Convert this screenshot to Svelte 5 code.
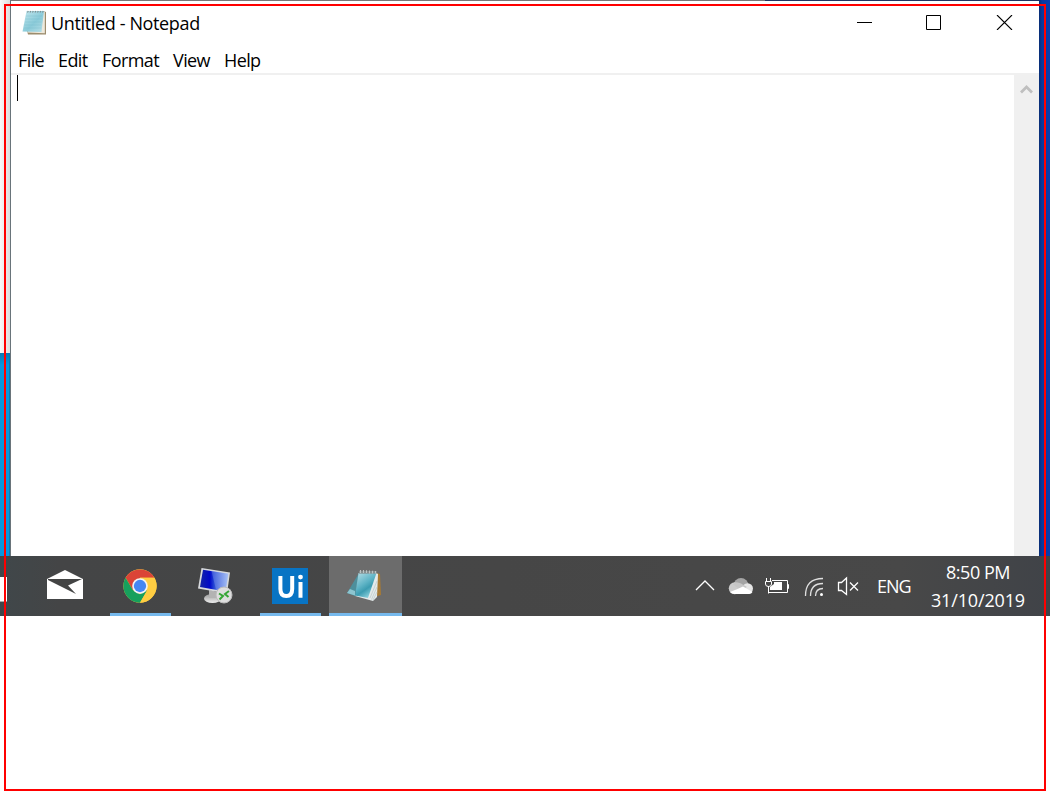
<script>
  const menus = [
    { label: 'File', width: 26 },
    { label: 'Edit', width: 30 },
    { label: 'Format', width: 57 },
    { label: 'View', width: 37 },
    { label: 'Help', width: 37 }
  ];
</script>

<div class="page">
  <div class="desktop">
    <div class="left-edge"><div class="pale"></div><div class="blue"></div></div>
    <main class="window">
      <div class="topline"></div>
      <header>
        <svg class="pad" width="25" height="26" viewBox="0 0 25 26">
          <defs><linearGradient id="pg" x1="0" x2="1" y2="1"><stop stop-color="#c5e8ef" /><stop offset=".55" stop-color="#8bcbd9" /><stop offset="1" stop-color="#b7dfe7" /></linearGradient></defs>
          <path d="M21 2 24 3V25.5H6L5 22Z" fill="#9c8c6d" />
          <path d="M21 2 22.8 3V24.2L5 23.5Z" fill="#eee9dc" />
          <path d="M4.5 2H22L19.5 23 .5 22.5Z" fill="url(#pg)" />
          <path d="M4 7H20M3.5 10H20M3 13H19.5M2.5 16H19M2 19H19" stroke="#72b9ca" stroke-width=".6" opacity=".5" />
          <path d="M5.5 3.5 6.3 2M8 3.5 8.8 2M10.5 3.5 11.3 2M13 3.5 13.8 2M15.5 3.5 16.3 2M18 3.5 18.8 2M20.5 3.5 21.3 2" stroke="#7f8c8f" stroke-width="1.1" />
        </svg>
        <span class="title">Untitled - Notepad</span>
        <svg class="controls" width="156" height="15" viewBox="0 0 156 15" fill="none" stroke="#000">
          <path d="M0 7.5H15M69.5.5H83.5V14.5H69.5Z" />
          <path d="M140 0 155 15M155 0 140 15" stroke-width="1.1" />
        </svg>
      </header>
      <nav>
        {#each menus as m}<span style="width:{m.width}px">{m.label}</span>{/each}
      </nav>
      <section>
        <div class="editor"><i></i></div>
        <div class="scroll">
          <svg width="13" height="10" viewBox="0 0 13 10"><path d="M1 8.5 6.5 3 12 8.5" fill="none" stroke="#bfbfbf" stroke-width="2.7" /></svg>
        </div>
      </section>
    </main>
    <div class="right-edge"></div>
  </div>
  <footer>
    <div class="partial"></div>
    <div class="app mail">
      <svg width="36" height="30" viewBox="0 0 36 30">
        <path d="M0 9 18 0 36 9V29H0Z" fill="#fff" />
        <path d="M1 9H35L21 15.5 29 24 1 10Z" fill="#434444" />
      </svg>
    </div>
    <div class="app chrome active">
      <svg width="34" height="34" viewBox="0 0 48 48">
        <circle cx="24" cy="24" r="23.5" fill="#fcca3f" />
        <path d="M3.7 12.3A23.5 23.5 0 0 1 44.4 12.3H24L13.8 29.8Z" fill="#db4437" />
        <path d="M3.7 12.3A23.5 23.5 0 0 0 24 47.5L34.2 29.9 24 35.5 13.8 29.8Z" fill="#16a05d" />
        <path d="M44.4 12.3H24L34.2 29.9 24 47.5A23.5 23.5 0 0 0 44.4 12.3Z" fill="#ffcd42" />
        <circle cx="24" cy="24" r="11" fill="#f3f3f3" /><circle cx="24" cy="24" r="8.7" fill="#4587f4" />
      </svg>
    </div>
    <div class="app rdp">
      <svg width="36" height="36" viewBox="0 0 36 36">
        <defs><linearGradient id="screen"><stop stop-color="#1424a5" /><stop offset=".35" stop-color="#0008c9" /><stop offset=".5" stop-color="#2749d5" /><stop offset="1" stop-color="#9bb8f5" /></linearGradient>
        <linearGradient id="base" y2="1" x2="0"><stop stop-color="#999" /><stop offset="1" stop-color="#eee" /></linearGradient></defs>
        <ellipse cx="14.5" cy="30.5" rx="8.5" ry="4.5" fill="url(#base)" />
        <path d="M11 22 20 24 19 30H11Z" fill="#b3b3b3" />
        <path d="M3.5 0 32 4.5 29 25.5 0 20.5Z" fill="#d7d9dc" />
        <path d="M5 1.7 30.3 5.7 27.5 23.5 2 19Z" fill="url(#screen)" />
        <path d="M13.5 3.1 30.3 5.7 27.5 23.5 18 21.8Z" fill="#d4e4ff" opacity=".22" />
        <circle cx="26" cy="27" r="8" fill="#dedede" stroke="#bcbcbc" />
        <path d="M21 25.5 25 28 21.5 31.5M31 23 27 26 30.5 29" stroke="#36a636" stroke-width="2" fill="none" />
      </svg>
    </div>
    <div class="app ui active"><div class="uilogo">
      <svg width="36" height="36" viewBox="0 0 36 36" fill="none" stroke="#fff" stroke-width="4">
        <path d="M8.4 8V21Q8.4 28 14.3 28T20.2 21V8M28.5 14V29.7" /><circle cx="28.5" cy="9.1" r="2.4" fill="#fff" stroke="none" />
      </svg></div>
    </div>
    <div class="app notes active">
      <svg width="35" height="33" viewBox="0 0 35 33">
        <defs><linearGradient id="note" x1="0" y1="0" x2=".6" y2="1"><stop stop-color="#b9dfe6" /><stop offset=".5" stop-color="#5fb4c6" /><stop offset=".7" stop-color="#3c9cb1" /><stop offset="1" stop-color="#8fd3df" /></linearGradient></defs>
        <path d="M29 4 33 5 34 26 27 28Z" fill="#a77a35" />
        <path d="M29 4 31 5 30 28 26 32 8 27Z" fill="#e4eaeb" />
        <path d="M23 29 30 12M24.5 30.5 30 18M26 31 30 23" stroke="#b3c2c3" stroke-width=".6" />
        <path d="M12 4 0 24 8 27 11 9Z" fill="#4d8f9c" />
        <path d="M3 20 8 22V26.5L0 24Z" fill="#8dc5d0" />
        <path d="M11.5 4H29.5L21 29 8 26.5Z" fill="url(#note)" />
        <path d="M12 3.3H29.5" stroke="#80898a" stroke-width="2.6" />
        <path d="M13.5 1V4M16.5 1V4M19.5 1.3V4M22.5 1.5V4.5M25.5 1.7V4.5M28.5 2V4.5" stroke="#bcc2c2" stroke-width="1.2" />
      </svg>
    </div>
    <div class="tray">
      <svg width="164" height="22" viewBox="0 0 164 22" fill="none" stroke="#fff" stroke-width="1.3">
        <path d="M1 15 10 6 19 15" />
        <g stroke="none"><circle cx="46" cy="10.5" r="7.5" fill="#a4a4a4" /><circle cx="39.8" cy="13.2" r="6" fill="#ccc" /><circle cx="52.6" cy="13.6" r="5.4" fill="#e6e6e6" /><path d="M38 9.5Q41 6 46 8.5L52 12 46 15Z" fill="#c6c6c6" /><path d="M35 17Q43 14 48 11.5L57.5 17Q56.5 19 54 19H39.5Q36.5 19 35 17Z" fill="#fff" /></g>
        <g stroke-width="1"><path d="M77 5.5H92.5V17.5H73.5V11M93 9.5H93.5V13.5H93" /><path d="M79 7H87V15H75V12L79 9Z" fill="#fff" stroke="none" /><path d="M70.5 6.5H76.5V9Q76.5 11.5 73.5 11.5T70.5 9ZM71.5 3V6M75.5 3V6M73.5 11.5V18.5" /></g>
        <g stroke="#dfdfdf"><path d="M110.5 21Q110.5 3.5 128 3.5M115.5 21Q115.5 8.5 128 8.5M120.5 21Q120.5 13.5 128 13.5" /><circle cx="126.5" cy="19.5" r="1.5" fill="#fff" stroke="none" /></g>
        <path d="M143.5 7.5H146.5L151.5 3V19.5L146.5 15.5H143.5ZM155 7.5 163 15.5M163 7.5 155 15.5" />
      </svg>
      <span class="eng">ENG</span>
      <div class="clock"><span class="time">8:50 PM</span><span class="date">31/10/2019</span></div>
    </div>
  </footer>
  <div class="frame"></div>
</div>

<style>
  :global(body) { margin: 0; background: #fff; }
  .page { position: relative; width: 1050px; height: 795px; overflow: hidden; font-family: "Open Sans", sans-serif; font-size: 18px; color: #000; }
  .desktop { display: flex; height: 556px; }
  .left-edge { width: 10px; display: flex; flex-direction: column; }
  .pale { height: 353px; background: linear-gradient(90deg, #fafafa, #ddd); }
  .blue { flex: 1; background: linear-gradient(#0879b0, #0797df 12px); border-right: 1px solid #087bb5; }
  .window { box-sizing: border-box; width: 1029px; border-left: 1px solid #69747a; display: flex; flex-direction: column; background: #fff; }
  .topline { height: 1px; background: linear-gradient(90deg, #777 0 754px, #203461 754px); }
  header { height: 45px; display: flex; align-items: flex-start; }
  .pad { margin: 8px 0 0 11px; }
  .title { width: 154px; margin: 10px 0 0 4px; line-height: 25px; white-space: nowrap; letter-spacing: -.36px; }
  .controls { margin: 14px 0 0 652px; }
  nav { height: 27px; display: flex; gap: 14px; padding-left: 7px; border-bottom: 2px solid #f0f0f0; line-height: 29px; letter-spacing: -.6px; }
  nav span { flex: none; white-space: nowrap; }
  section { flex: 1; display: flex; }
  .editor { flex: 1; padding-left: 6px; }
  .editor i { display: block; width: 1px; height: 26px; background: #000; }
  .scroll { width: 25px; background: #f0f0f0; display: flex; justify-content: center; padding-top: 9px; box-sizing: border-box; }
  .right-edge { flex: 1; background: linear-gradient(90deg, #092d73, #0639a0 3px, #063eb0); }
  footer { height: 60px; display: flex; background: linear-gradient(90deg, #40474a, #444546 60px, #464646 500px, #484848 900px, #404348); color: #fff; }
  .partial { width: 7px; height: 24px; margin-top: 21px; background: #fff; border-bottom: 1px solid #aaa; }
  .app { height: 60px; box-sizing: border-box; display: flex; justify-content: center; align-items: flex-start; }
  .active { border-bottom: 3px solid #76b9ed; }
  .mail { width: 36px; margin-left: 40px; padding-top: 14px; }
  .chrome { width: 61px; margin-left: 27px; padding: 13px 1px 0 0; }
  .rdp { width: 36px; margin-left: 27px; padding-top: 12px; }
  .ui { width: 61px; margin-left: 26px; padding-top: 12px; }
  .uilogo { width: 36px; height: 36px; background: #0874c4; margin-right: 1px; }
  .notes { width: 73px; margin-left: 8px; padding: 13px 2px 0 0; background: #6c6c6c; }
  .tray { margin-left: 293px; display: flex; align-items: flex-start; }
  .tray svg { margin-top: 19px; }
  .eng { width: 36px; margin: 18px 0 0 18px; line-height: 25px; letter-spacing: -1px; }
  .clock { width: 96px; margin-left: 17px; padding-top: 2px; display: flex; flex-direction: column; align-items: center; line-height: 28px; white-space: nowrap; }
  .time { letter-spacing: -.45px; }
  .date { letter-spacing: -.15px; }
  .frame { position: absolute; left: 4px; top: 4px; width: 1038px; height: 783px; border: 2px solid #f00; pointer-events: none; }
</style>
